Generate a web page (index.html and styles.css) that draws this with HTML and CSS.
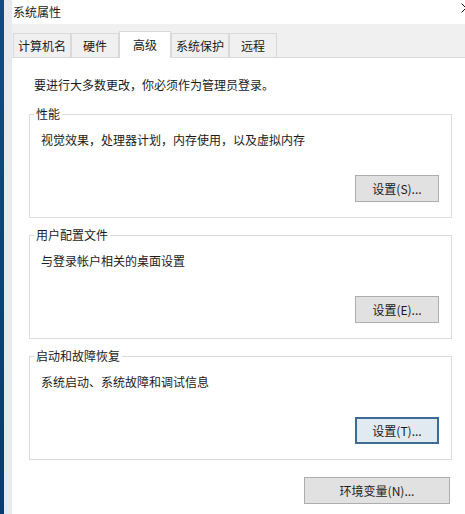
FILE: index.html
```html
<!DOCTYPE html>
<html lang="zh-CN">
<head>
  <meta charset="UTF-8">
  <meta name="viewport" content="width=device-width, initial-scale=1.0">
  <title>系统属性</title>
  <link rel="stylesheet" href="styles.css">
</head>
<body>
  <div class="desk"></div>
  <div class="dialog">
    <div class="titlebar">
      <span class="title">系统属性</span>
      <svg class="close" width="10" height="10" viewBox="0 0 10 10">
        <path d="M0.5 0.5 L9.5 9.5 M9.5 0.5 L0.5 9.5" stroke="#111" stroke-width="1" fill="none"/>
      </svg>
    </div>
    <div class="tabs">
      <div class="tab">计算机名</div>
      <div class="tab">硬件</div>
      <div class="tab active">高级</div>
      <div class="tab">系统保护</div>
      <div class="tab">远程</div>
    </div>
    <div class="page">
      <p class="note">要进行大多数更改，你必须作为管理员登录。</p>
      <fieldset class="group">
        <legend>性能</legend>
        <p class="desc">视觉效果，处理器计划，内存使用，以及虚拟内存</p>
        <div class="actions"><button class="btn">设置(S)...</button></div>
      </fieldset>
      <fieldset class="group">
        <legend>用户配置文件</legend>
        <p class="desc">与登录帐户相关的桌面设置</p>
        <div class="actions"><button class="btn">设置(E)...</button></div>
      </fieldset>
      <fieldset class="group">
        <legend>启动和故障恢复</legend>
        <p class="desc">系统启动、系统故障和调试信息</p>
        <div class="actions"><button class="btn focused">设置(T)...</button></div>
      </fieldset>
      <div class="footer">
        <button class="btn wide">环境变量(N)...</button>
      </div>
    </div>
  </div>
</body>
</html>
```

FILE: styles.css
```css
* {
  box-sizing: border-box;
}
body {
  margin: 0;
  width: 465px;
  height: 514px;
  overflow: hidden;
  display: flex;
  background: #fff;
  color: #1a1a1a;
  font-family: "Noto Sans CJK SC", "Noto Sans", sans-serif;
  font-size: 12px;
  line-height: 16px;
}
.desk {
  width: 4px;
  flex: none;
  background: linear-gradient(#0f4a86, #0b3a6c);
}
.dialog {
  flex: 1;
  display: flex;
  flex-direction: column;
  border-left: 8px solid #e6e9ee;
  min-width: 0;
}
.titlebar {
  position: relative;
  height: 24px;
  padding: 4px 0 0 1px;
  background: #fff;
}
.close {
  position: absolute;
  top: 3px;
  right: -6px;
}
.tabs {
  display: flex;
  align-items: flex-end;
  height: 34px;
  padding-left: 1px;
  background: #f0f0f0;
  border-bottom: 1px solid #d9d9d9;
}
.tab {
  height: 24px;
  min-width: 48px;
  padding: 2px 4px 0;
  line-height: 20px;
  text-align: center;
  border: 1px solid #d9d9d9;
  border-bottom: none;
  background: #f0f0f0;
  white-space: nowrap;
}
.tab.active {
  position: relative;
  z-index: 1;
  height: 27px;
  min-width: 52px;
  margin-bottom: -1px;
  padding-top: 5px;
  line-height: 16px;
  background: #fff;
}
.page {
  flex: 1;
  display: flex;
  flex-direction: column;
  padding: 19px 13px 0 17px;
  background: #fff;
}
.note {
  margin: 0 0 13px 5px;
}
.group {
  margin: 0 0 9px;
  padding: 10px 12px 15px 11px;
  border: 1px solid #dcdcdc;
  min-width: 0;
}
.group legend {
  margin-left: -7px;
  padding: 0 2px;
}
.desc {
  margin: 0 0 27px;
}
.actions {
  display: flex;
  justify-content: flex-end;
}
.btn {
  width: 84px;
  height: 27px;
  padding: 0;
  font: inherit;
  color: #1a1a1a;
  background: #e1e1e1;
  border: 1px solid #adadad;
}
.btn.focused {
  border: 2px solid #3d6b93;
  background: #e2eaf1;
}
.footer {
  display: flex;
  justify-content: flex-end;
  margin-top: 8px;
  padding-right: 2px;
}
.btn.wide {
  width: 146px;
}
```
